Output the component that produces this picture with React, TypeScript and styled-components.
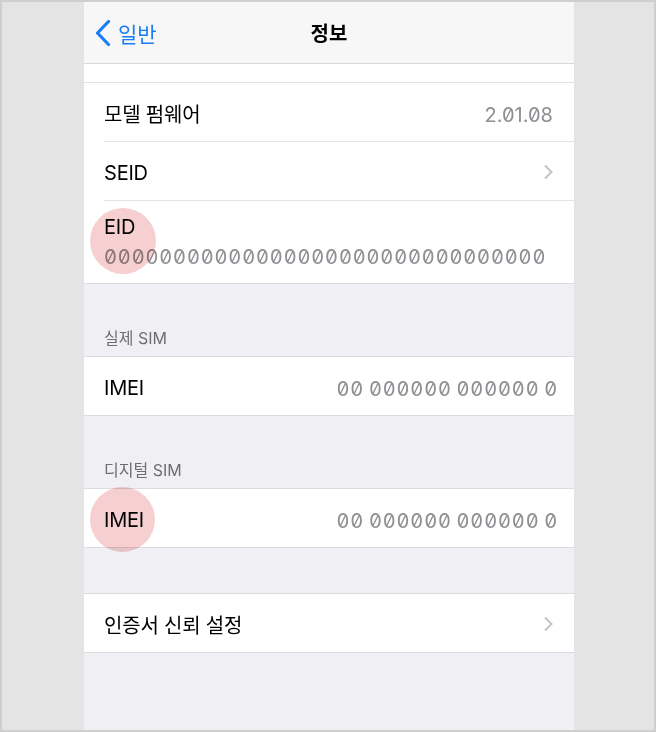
import styled, { createGlobalStyle } from "styled-components";

const GlobalStyle = createGlobalStyle`
  html, body {
    margin: 0;
    padding: 0;
    background: #e4e4e4;
  }
  * {
    box-sizing: border-box;
  }
`;

const Frame = styled.div`
  width: 656px;
  height: 732px;
  border: 2px solid #cfcfcf;
  background: #e4e4e4;
  padding-left: 82px;
  overflow: hidden;
`;

const Phone = styled.div`
  position: relative;
  width: 490px;
  height: 100%;
  background: #efeff4;
  display: flex;
  flex-direction: column;
  font-family: Inter, "Noto Sans CJK KR", sans-serif;
  color: #000;
`;

const NavBar = styled.div`
  position: relative;
  height: 62px;
  background: #f7f7f7;
  border-bottom: 1px solid #d9d9d9;
  display: flex;
  align-items: center;
  justify-content: center;
`;

const BackButton = styled.div`
  position: absolute;
  left: 11px;
  top: 0;
  height: 100%;
  display: flex;
  align-items: center;
  gap: 7px;
  color: #1a7cf6;
  font-size: 21px;
  font-family: "Noto Sans CJK KR", sans-serif;
`;

const Title = styled.div`
  font-size: 20px;
  font-weight: 700;
  font-family: "Noto Sans CJK KR", sans-serif;
`;

const TopSpacer = styled.div`
  height: 18px;
  background: #fff;
`;

const Section = styled.div<{ $top?: boolean }>`
  background: #fff;
  border-top: 1px solid ${(p) => (p.$top ? "#e2e2e6" : "#dcdce0")};
  border-bottom: 1px solid #dcdce0;
`;

const Row = styled.div`
  box-sizing: content-box;
  height: 56px;
  padding: 2px 21px 0 0;
  margin-left: 20px;
  display: flex;
  align-items: center;
  justify-content: space-between;
  border-bottom: 1px solid #e4e4e7;
  &:last-child {
    border-bottom: none;
  }
`;

const StackRow = styled(Row)`
  height: 80px;
  padding: 0 21px 2px 0;
  flex-direction: column;
  align-items: flex-start;
  justify-content: center;
  gap: 3px;
`;

const Label = styled.div<{ $latin?: boolean }>`
  font-size: 20px;
  letter-spacing: -0.2px;
  padding-top: ${(p) => (p.$latin ? 1 : 0)}px;
`;

const Value = styled.div<{ $mono?: boolean }>`
  font-size: 20px;
  color: #8e8e93;
  font-family: Inter, sans-serif;
  padding-top: 3px;
  font-feature-settings: ${(p) => (p.$mono ? `"tnum", "zero"` : `"zero"`)};
  letter-spacing: ${(p) => (p.$mono ? "0.85px" : "0")};
  word-spacing: ${(p) => (p.$mono ? "-1.5px" : "0")};
`;

const ImeiValue = styled(Value)`
  margin-right: -5px;
`;

const GroupHeader = styled.div<{ $h: number }>`
  height: ${(p) => p.$h}px;
  display: flex;
  align-items: flex-end;
  padding: 0 0 7px 20px;
  font-size: 16px;
  color: #6d6d72;
`;

const Highlight = styled.div<{ $x: number; $y: number; $d: number }>`
  position: absolute;
  left: ${(p) => p.$x}px;
  top: ${(p) => p.$y}px;
  width: ${(p) => p.$d}px;
  height: ${(p) => p.$d}px;
  border-radius: 50%;
  background: #f6d0d0;
  mix-blend-mode: multiply;
  pointer-events: none;
`;

function Chevron() {
  return (
    <svg width="10" height="16" viewBox="0 0 10 16">
      <path d="M2 1.5l6.5 6.5L2 14.5" fill="none" stroke="#c4c4c8" strokeWidth="2" />
    </svg>
  );
}

function BackChevron() {
  return (
    <svg width="16" height="26" viewBox="0 0 16 26">
      <path d="M13.5 1.5L2.5 13l11 11.5" fill="none" stroke="#1a7cf6" strokeWidth="3.2" strokeLinecap="round" strokeLinejoin="round" />
    </svg>
  );
}

export default function App() {
  return (
    <>
      <GlobalStyle />
      <Frame>
        <Phone>
          <NavBar>
            <BackButton>
              <BackChevron />
              <span>일반</span>
            </BackButton>
            <Title>정보</Title>
          </NavBar>
          <TopSpacer />
          <Section $top>
            <Row>
              <Label>모델 펌웨어</Label>
              <Value>2.01.08</Value>
            </Row>
            <Row>
              <Label $latin>SEID</Label>
              <Chevron />
            </Row>
            <StackRow>
              <Label $latin>EID</Label>
              <Value $mono>00000000000000000000000000000000</Value>
            </StackRow>
          </Section>
          <GroupHeader $h={72}>실제 SIM</GroupHeader>
          <Section>
            <Row>
              <Label $latin>IMEI</Label>
              <ImeiValue $mono>00 000000 000000 0</ImeiValue>
            </Row>
          </Section>
          <GroupHeader $h={72}>디지털 SIM</GroupHeader>
          <Section>
            <Row>
              <Label $latin>IMEI</Label>
              <ImeiValue $mono>00 000000 000000 0</ImeiValue>
            </Row>
          </Section>
          <GroupHeader $h={45} />
          <Section>
            <Row>
              <Label>인증서 신뢰 설정</Label>
              <Chevron />
            </Row>
          </Section>
          <Highlight $x={6} $y={206} $d={66} />
          <Highlight $x={6} $y={485} $d={65} />
        </Phone>
      </Frame>
    </>
  );
}
